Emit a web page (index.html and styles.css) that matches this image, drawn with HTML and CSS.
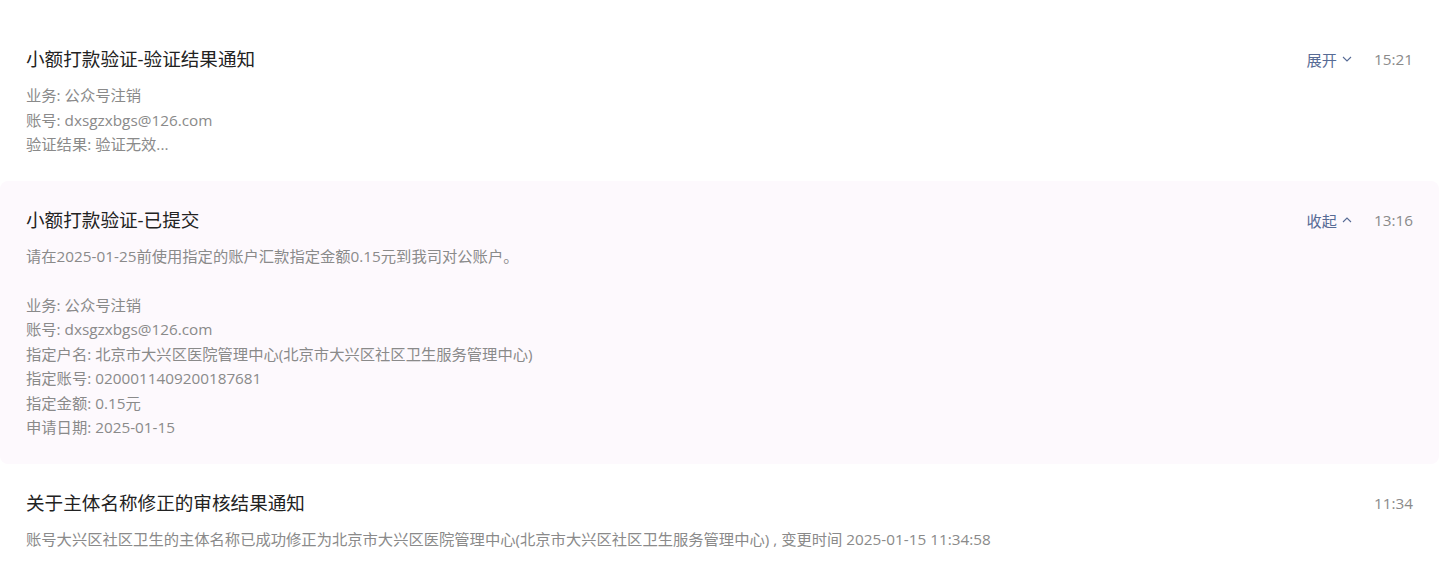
FILE: index.html
```html
<!DOCTYPE html>
<html lang="zh-CN">
  <head>
    <meta charset="UTF-8" />
    <meta name="viewport" content="width=device-width, initial-scale=1.0" />
    <title>通知</title>
    <link rel="stylesheet" href="styles.css">
  </head>
  <body>
    <main class="msgList">
      <section class="msg">
        <div class="msgHead">
          <h2 class="msgTitle">小额打款验证-验证结果通知</h2>
          <span class="toggle">展开
            <svg class="chevron" viewBox="0 0 10 6" width="10" height="6"><path d="M1 1 L5 5 L9 1" /></svg>
          </span>
          <span class="msgTime">15:21</span>
        </div>
        <div class="msgBody">
          <p>业务: 公众号注销</p>
          <p>账号: dxsgzxbgs@126.com</p>
          <p>验证结果: 验证无效...</p>
        </div>
      </section>

      <section class="msg msgOpen">
        <div class="msgHead">
          <h2 class="msgTitle">小额打款验证-已提交</h2>
          <span class="toggle">收起
            <svg class="chevron" viewBox="0 0 10 6" width="10" height="6"><path d="M1 5 L5 1 L9 5" /></svg>
          </span>
          <span class="msgTime">13:16</span>
        </div>
        <div class="msgBody">
          <p>请在2025-01-25前使用指定的账户汇款指定金额0.15元到我司对公账户。</p>
          <p>&nbsp;</p>
          <p>业务: 公众号注销</p>
          <p>账号: dxsgzxbgs@126.com</p>
          <p>指定户名: 北京市大兴区医院管理中心(北京市大兴区社区卫生服务管理中心)</p>
          <p>指定账号: 0200011409200187681</p>
          <p>指定金额: 0.15元</p>
          <p>申请日期: 2025-01-15</p>
        </div>
      </section>

      <section class="msg">
        <div class="msgHead">
          <h2 class="msgTitle">关于主体名称修正的审核结果通知</h2>
          <span class="msgTime">11:34</span>
        </div>
        <div class="msgBody">
          <p>账号大兴区社区卫生的主体名称已成功修正为北京市大兴区医院管理中心(北京市大兴区社区卫生服务管理中心) , 变更时间 2025-01-15 11:34:58</p>
        </div>
      </section>
    </main>
  </body>
</html>
```

FILE: styles.css
```css
body {
  margin: 0;
  font-family: 'Open Sans', 'Noto Sans CJK SC', sans-serif;
  background: #ffffff;
}
.msgList {
  margin: 20px 15px 0 0;
  display: flex;
  flex-direction: column;
}
.msg {
  padding: 25px 26px 24px 26px;
  border-radius: 8px;
}
.msgOpen {
  background-color: #fdf9fd;
}
.msgHead {
  display: flex;
  align-items: center;
  height: 28px;
}
.msgTitle {
  flex: 1 1 auto;
  margin: 0;
  font-size: 18.6px;
  font-weight: normal;
  line-height: 28px;
  color: #222222;
}
.toggle {
  display: flex;
  align-items: center;
  gap: 5px;
  font-size: 15.2px;
  color: #576b95;
  margin-right: 22px;
}
.chevron {
  fill: none;
  stroke: #576b95;
  stroke-width: 1.1;
}
.msgTime {
  font-size: 15.3px;
  color: #8a8a8a;
}
.msgBody {
  margin-top: 10px;
  font-size: 15.3px;
  line-height: 24.5px;
  color: #8a8a8a;

  & > p {
    margin: 0;
  }
}
```
